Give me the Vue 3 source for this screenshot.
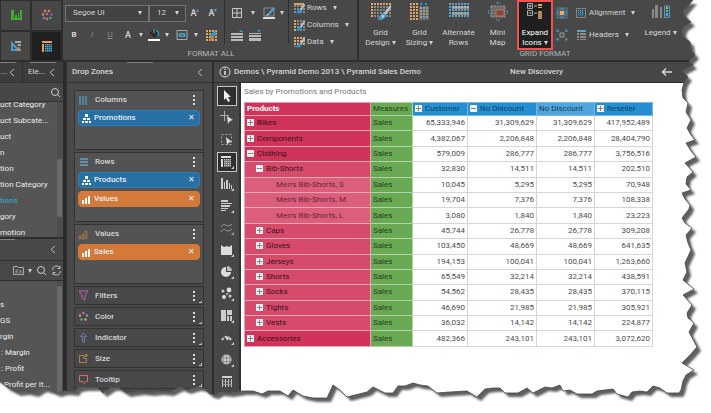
<script setup>
import { ref } from 'vue'

const font = ref('Segoe UI')
const size = ref('12')

const grid = (color, x0, y0, cols, rows, step = 3) => {
  let out = ''
  for (let r = 0; r < rows; r++)
    for (let c = 0; c < cols; c++)
      out += `<rect x="${x0 + c * step}" y="${y0 + r * step}" width="${step - 1}" height="${step - 1}" fill="${color}"/>`
  return out
}
const brush = '<path d="M17 1 10 10" stroke="#c4c4c4" stroke-width="2.4" stroke-linecap="round"/><path d="M10 8c-4 0-4 5-7 6 4 2 9 0 9-4z" fill="#4aa3cc"/><path d="M8 10l2 1-2 2z" fill="#fff"/>'
const smallBrush = '<path d="m11 3-4 6" stroke="#c4c4c4" stroke-width="2" stroke-linecap="round"/><path d="M7 7c-3 0-2 4-4 4 3 1 6 0 5-3z" fill="#1c9bd6"/>'
const gray = '#8a8a8a'
const tan = '#e0a862'

const icons = {
  chart: '<path d="M1 1h3v10H1zM5 6h2v5H5zM8 4h1v7H8zM10 1h2v10h-2zM1 9h11v2H1z" fill="#3fae2a"/>',
  dots: '<g><circle cx="4" cy="2" r="1.4" fill="#d9705f"/><circle cx="8" cy="2" r="1.4" fill="#d96f5f"/><circle cx="2" cy="5.500" r="1.300" fill="#cf8344"/><circle cx="6" cy="5" r="1.200" fill="#8f7fc0"/><circle cx="10.500" cy="5.500" r="1.300" fill="#8f5fae"/><circle cx="3" cy="9" r="1.300" fill="#5b89c7"/><circle cx="6" cy="10" r="1.400" fill="#e06c3c"/><circle cx="9.500" cy="9" r="1.300" fill="#4b9bb5"/></g>',
  design: '<path d="M1 1v10h10z" fill="#4f9cc5"/><path d="M3 6v3h3z" fill="#454545"/><path d="M5 1h6v2H5zM7 4h4v2H8z" fill="#a8a8a8"/><path d="m9 6 2 5H7z" fill="#cf9158"/>',
  grid: '<path d="M1 1h10v2H1zM1 4h2v8H1z" fill="#e0a05b"/><path d="M4 4h7v8H4z" fill="#2f5f7c"/>' + grid('#5fa9d0', 4, 4, 4, 4, 2),
  borders: '<path d="M1.500 1.500h9v9h-9zM6 1.500v9M1.500 6h9" fill="none" stroke="#c8c8c8"/>',
  paint: '<path d="M1 1h10v8H1z" fill="none" stroke="#8d8d8d"/><path d="m11 1-5 6" stroke="#4aa3cc" stroke-width="2"/><path d="M5 6 3 9l3-1z" fill="#ccc"/><path d="M0 10h12v2H0z" fill="#ddd"/>',
  fill: '<path d="m2 4 4-3 4 4-4 3z" fill="#303030" stroke="#222"/><path d="M6 0v4" stroke="#999"/><path d="M8 2c3 0 3 3 2 5" fill="none" stroke="#2b90bd" stroke-width="1.500"/><path d="M0 10h12v2H0z" fill="#fff"/>',
  merge: '<path d="M1 1.500h10v9H1z" fill="none" stroke="#a8a8a8"/><path d="M3 4h6v4H3zM1 5.500h2v1H1zM9 5.500h2v1H9z" fill="#4a9dc8"/><path d="M4 6h4" stroke="#2c5d78"/>',
  clear: grid(tan, 1, 1, 4, 4) + '<path d="m11 3-5 5" stroke="#2f9bd2" stroke-width="3"/><path d="m7 7-3 3 2 2 3-3z" fill="#e06a4e"/>',
  lineUp: '<path d="M0 4h12v2H0zM0 7h12v2H0zM0 10h12v2H0z" fill="#b9b9b9"/><path d="m8 3 2-2 2 2z" fill="#35a0d4"/>',
  lineDown: '<path d="M0 4h12v1H0zM0 6h12v2H0zM0 9h12v3H0z" fill="#b9b9b9"/><path d="m8 1 2 2 2-2z" fill="#35a0d4"/>',
  rows: grid(gray, 1, 3, 4, 3) + '<path d="M1 1h10v2H1z" fill="#d9a05e"/>' + smallBrush,
  columns: grid(gray, 1, 1, 4, 4) + grid(tan, 1, 1, 1, 4) + smallBrush,
  data: grid(tan, 1, 1, 4, 3) + '<path d="M1 10h4v1H1z" fill="#888"/>' + smallBrush,
  gridDesign: grid(gray, 0, 1, 7, 5) + grid(tan, 0, 1, 7, 1) + grid(tan, 0, 1, 1, 5) + '<g transform="translate(3 3)">' + brush + '</g>',
  gridSizing: '<path d="M9 4h10v14H9z" fill="#6a6a6a"/>' + grid('#9a9a9a', 10, 5, 3, 4) + grid(tan, 0, 1, 3, 6) + '<path d="M10 1h2v2h-2zM15 1h2v2h-2z" fill="#26a0dc"/>',
  altRows: grid('#5ba3cb', 0, 1, 7, 5) + '<path d="M3 4h17v3H3zM3 10h17v3H3z" fill="#8d8d8d"/>' + grid('#b5b5b5', 3, 4, 6, 1) + grid('#a5a5a5', 3, 10, 6, 1),
  miniMap: '<path d="M3 4h14v11H3z" fill="#6c6c6c" stroke="#999" stroke-dasharray="2 1"/><path d="M8 8h8v6H8z" fill="#7b4a43" stroke="#d86a55"/><path d="m8 2 2-2 2 2M8 17l2 2 2-2M1 8l-1 2 1 2M19 8l1 2-1 2" fill="none" stroke="#4795bb"/>',
  expand: '<path d="M2.500 1.500h5v5h-5zM2.500 8.500h5v5h-5z" fill="none" stroke="#aaa"/><path d="M3.500 4h3M5 2.500v3M3.500 11h3M9 4h3M9 11h3" fill="none" stroke="#bbb"/><path d="M13 2h4v2h-4zM13 5h4v1h-4z" fill="#eba45b"/><path d="M13 9h4v8h-4z" fill="#b98a50"/>',
  fit: '<path d="M1 1h10v10H1zM1 4h10M1 8h10M4 1v10M8 1v10" fill="none" stroke="#50819b"/><path d="M4 4h4v4H4z" fill="#f0aa58"/><path d="M6 1v2M6 9v2M1 6h2M9 6h2" stroke="#58b3e0"/>',
  spread: '<path d="M4 4h4v4H4z" fill="#555" stroke="#999"/><path d="M1 3V1h2M9 1h2v2M11 9v2H9M3 11H1V9M1 1l2 2M11 1 9 3M1 11l2-2M11 11 9 9" fill="none" stroke="#4a9ac4"/>',
  align: '<path d="M1.500 1.500h9v9h-9z" fill="none" stroke="#858585"/><path d="M3 3h6v6H3z" fill="#2f5c75"/>' + grid('#55a7d4', 3, 3, 3, 3, 2),
  headers: '<path d="M2 1h9v2H2z" fill="#55a7d4"/><path d="M2 4h2v2H2zM5 4h6v2H5zM2 7h2v2H2zM5 7h6v2H5zM2 10h2v1H2zM5 10h6v1H5z" fill="#8b8b8b"/>',
  legend: '<path d="M1 7h2v9H1zM4 3h3v13H4zM9 5h2v11H9z" fill="#898989"/><path d="M13.500 4h5v11.500h-5z" fill="#3a5666" stroke="#549ac0"/><path d="M15 5h2v2h-2z" fill="#e6a057"/><path d="M15 8h2v2h-2z" fill="#77b544"/><path d="M15 11h2v3h-2z" fill="#50a8d8"/>',
  zColumns: '<path d="M2 1v9M5 1v9M8 1v9" stroke="#5698bd" stroke-width="1.400"/>',
  zRows: '<path d="M2 2h8M2 5h8M2 8h8" stroke="#69a2bf" stroke-width="1.400"/>',
  zValues: '<path d="M1 7h2v3H1zM4 5h2v5H4zM7 2h2v8H7z" fill="#7a5c3e" stroke="#a5825a" stroke-width="0.600"/>',
  zFilters: '<path d="M1 1h9L7 5v5L4 8V5z" fill="none" stroke="#b066ad"/>',
  zColor: '<circle cx="5.500" cy="2" r="1.300" fill="#c966b8"/><circle cx="2" cy="4.500" r="1.300" fill="#e88254"/><circle cx="9" cy="4.500" r="1.300" fill="#6b93e0"/><circle cx="3.500" cy="8.500" r="1.300" fill="#43b0a4"/><circle cx="7.500" cy="8.500" r="1.300" fill="#dda23f"/>',
  zIndicator: '<path d="m5.500 1 3 3.500h-2V10h-2V4.500h-2z" fill="none" stroke="#7678bd"/>',
  zSize: '<path d="M5.500 2.500h-4v7h7v-4h-3zM7 1.500h2v2H7z" fill="none" stroke="#ad824e"/>',
  zTooltip: '<path d="M1.500 1.500h8v6h-2l-1.500 2-1.500-2h-3z" fill="none" stroke="#cf6f6b"/>',
  tree: '<path d="M4 1h3v3H4zM2 5h3v2H2zM6 5h3v2H6zM1 8h2v2H1zM4 8h3v2H4zM8 8h2v2H8z" fill="#fff"/>',
  bars: '<path d="M1 6h2v4H1zM4 4h2v6H4zM7 2h2v8H7z" fill="#fff"/>',
  cursor: '<path d="M4 1v10l2-2 2 4 2-1-2-4h3z" fill="#eee"/>',
  cross: '<path d="M4.500 0v10M0 4.500h9" stroke="#aaa"/><path d="m7 5 6 4-3 1-2 3z" fill="#ddd"/>',
  region: '<path d="M1.500 1.500h10v10h-10z" fill="none" stroke="#aaa" stroke-dasharray="2 2"/><path d="m6 4 6 5-3 .5L7 12z" fill="#ddd"/>',
  table: '<path d="M1 1h10v2H1zM1 4h2v8H1z" fill="#ddd"/><path d="M4 4h7v8H4z" fill="#777"/>' + grid('#c8c8c8', 4, 4, 4, 4, 2) + '<path d="M14 11v3h-3z" fill="#ccc"/>',
  column: '<path d="M1 1h2v11H1zM4 5h1v7H4zM6 3h2v9H6zM9 6h1v6H9zM11 8h1v4h-1z" fill="#ccc"/><path d="M14 11v3h-3z" fill="#ccc"/>',
  bar: '<path d="M1 1h7v2H1zM1 4h11v1H1zM1 6h9v2H1zM1 9h7v1H1zM1 11h5v1H1z" fill="#ccc"/><path d="M14 11v3h-3z" fill="#ccc"/>',
  line: '<path d="M1 6c4-7 5 3 11-3M1 11c4-7 5 3 11-3" fill="none" stroke="#999"/><path d="M14 11v3h-3z" fill="#aaa"/>',
  area: '<path d="M1 2l3 2 3-1 2 1 3-2v10H1z" fill="#ddd"/><path d="M14 11v3h-3z" fill="#ccc"/>',
  pie: '<path d="M6 2a5 5 0 1 0 5 5H6z" fill="#ddd"/><path d="M7 1a5 5 0 0 1 5 5H7z" fill="#bbb"/><path d="M14 11v3h-3z" fill="#ccc"/>',
  bubble: '<circle cx="3" cy="4" r="1.500" fill="#ccc"/><circle cx="9" cy="3" r="2.400" fill="#ddd"/><circle cx="7" cy="7" r="1" fill="#ccc"/><circle cx="4" cy="10" r="2" fill="#ddd"/><circle cx="10" cy="9" r="1.500" fill="#ccc"/><path d="M14 11v3h-3z" fill="#ccc"/>',
  treemap: '<path d="M1 1h5v11H1zM7 1h5v5H7zM7 7h2v5H7zM10 7h2v5h-2z" fill="#ccc"/><path d="M14 11v3h-3z" fill="#ccc"/>',
  gauge: '<path d="M2 9a5 5 0 0 1 9 0" fill="none" stroke="#ccc" stroke-width="2"/><path d="m4 5 4 5" stroke="#474747" stroke-width="3"/><path d="m5 5 3 4" stroke="#ddd" stroke-width="1.500"/><path d="M14 11v3h-3z" fill="#ccc"/>',
  globe: '<circle cx="6.500" cy="6.500" r="5" fill="#ccc"/><path d="M1 5h11M1 8.500h11M6.500 1v11M4 2q-2 4 0 9M9 2q2 4 0 9" fill="none" stroke="#777" stroke-width="0.700"/><path d="M14 11v3h-3z" fill="#ccc"/>',
  matrix: '<path d="M2 1h10v2H2zM2 4h1v8H2zM5 4h1v8H5zM8 4h1v8H8zM11 4h1v8h-1z" fill="#ccc"/><path d="M2 6.500h10M2 9.500h10" stroke="#999"/>',
  search: '<circle cx="5" cy="5" r="3.500" fill="none" stroke="#ccc"/><path d="m7.500 7.500 2.500 2.500" stroke="#ccc"/>',
  folder: '<path d="M.5 1.500h4l1 1h5v7H.5z" fill="none" stroke="#aaa"/><path d="M3 8.500V5h2M3 7h2M6 5l3 3.500M9 5 6 8.500" fill="none" stroke="#aaa" stroke-width="0.800"/>',
  refresh: '<path d="M1.500 5a4 4 0 0 1 7.500-2M9.500 6A4 4 0 0 1 2 8M9 1v2.500H6.500M2 10V7.500h2.500" fill="none" stroke="#bbb"/>',
  back: '<path d="M5 2 1.500 5.500 5 9M1.500 5.500H11" fill="none" stroke="#ddd" stroke-width="1.300"/>',
  info: '<circle cx="6" cy="6" r="5" fill="none" stroke="#ddd"/><path d="M6 5v4M6 2.500v1.300" stroke="#eee" stroke-width="1.400"/>',
  chevron: '<path d="M7 2 3 5.500 7 9" fill="none" stroke="#bbb"/>',
  '+': '<path d="M0 0h7v7H0z" fill="#f4f0f1"/><path d="M3 1h1v5H3zM1 3h5v1H1z" fill="#858585"/>',
  '-': '<path d="M0 0h7v7H0z" fill="#f4f0f1"/><path d="M1 3h5v1H1z" fill="#858585"/>',
}

const views = [
  { icon: 'chart', label: 'Chart' }, { icon: 'dots', label: 'Explore' },
  { icon: 'design', label: 'Design' }, { icon: 'grid', label: 'Grid', active: true },
]
const parts = [{ icon: 'rows', label: 'Rows' }, { icon: 'columns', label: 'Columns' }, { icon: 'data', label: 'Data' }]
const big = [
  { icon: 'gridDesign', a: 'Grid', b: 'Design', menu: true },
  { icon: 'gridSizing', a: 'Grid', b: 'Sizing', menu: true },
  { icon: 'altRows', a: 'Alternate', b: 'Rows' },
  { icon: 'miniMap', a: 'Mini', b: 'Map' },
  { icon: 'expand', a: 'Expand', b: 'Icons', menu: true, active: true },
]
const elements = ['uct Category', 'uct Subcate...', 'uct', 'n', 'tion', 'tion Category', 'tions', 'gory', 'motion']
const measures = ['s', 'GS', 'rgin', ': Margin', ': Profit', 'Profit per It...']
const zones = [
  { name: 'Columns', icon: 'zColumns', cls: 'one', chips: [{ t: 'Promotions', c: 'blue', i: 'tree' }] },
  { name: 'Rows', icon: 'zRows', cls: 'two', chips: [{ t: 'Products', c: 'blue', i: 'tree' }, { t: 'Values', c: 'orange', i: 'bars' }] },
  { name: 'Values', icon: 'zValues', cls: 'one', chips: [{ t: 'Sales', c: 'orange', i: 'bars' }] },
  ...['Filters', 'Color', 'Indicator', 'Size', 'Tooltip'].map(n => ({ name: n, icon: 'z' + n, cls: 'closed', chips: [] })),
]
const tools = ['cursor', 'cross', 'region', 'table', 'column', 'bar', 'line', 'area', 'pie', 'bubble', 'treemap', 'gauge', 'globe', 'matrix']
const rows = [
  ['Bikes', 0, '+', '65,333,946', '31,309,629', '417,952,489'],
  ['Components', 0, '+', '4,382,067', '2,206,848', '28,404,790'],
  ['Clothing', 0, '-', '579,009', '286,777', '3,756,516'],
  ['Bib-Shorts', 1, '-', '32,830', '14,511', '202,510'],
  ["Men's Bib-Shorts, S", 2, '', '10,045', '5,295', '70,948'],
  ["Men's Bib-Shorts, M", 2, '', '19,704', '7,376', '108,338'],
  ["Men's Bib-Shorts, L", 2, '', '3,080', '1,840', '23,223'],
  ['Caps', 1, '+', '45,744', '26,778', '309,208'],
  ['Gloves', 1, '+', '103,450', '48,669', '641,635'],
  ['Jerseys', 1, '+', '194,153', '100,041', '1,263,660'],
  ['Shorts', 1, '+', '65,549', '32,214', '438,591'],
  ['Socks', 1, '+', '54,562', '28,435', '370,115'],
  ['Tights', 1, '+', '46,690', '21,985', '305,921'],
  ['Vests', 1, '+', '36,032', '14,142', '224,877'],
  ['Accessories', 0, '+', '482,366', '243,101', '3,072,620'],
]

const edge = 'L693 0 688 6 683 12 685 17 691 22 684 27 682 32 685 38 690 42 691 50 695 55 689 61 693 65 682 71 688 77 684 82 682 90 683 98 688 103 686 112 691 120 687 128 691 135 695 140 686 143 691 151 696 157 685 163 693 172 687 177 686 184 691 190 682 193 685 199 690 205 689 209 682 218 685 223 692 228 686 235 688 243 691 250 685 263 687 272 683 280 694 289 683 295 692 305 687 313 688 318 694 323 689 332 697 347 690 355 682 363 694 370 686 375 683 381 681 390 679 393 667 393 660 388 653 386 647 392 640 391 632 392 628 397 617 394 613 389 605 390 597 391 592 394 577 394 570 390 563 391 560 385 552 388 545 387 533 393 527 388 518 393 505 393 500 388 493 388 485 389 477 397 467 391 450 392 437 393 428 386 420 385 413 383 405 386 398 386 393 393 385 393 373 387 367 392 347 397 340 390 333 385 327 398 313 398 303 396 293 390 288 396 280 391 268 391 262 394 253 391 243 391 230 393 220 392 215 395 210 394 203 388 197 387 187 390 180 387 170 392 160 391 150 392 141 391 133 392 127 393 117 387 112 387 103 393 97 387 85 387 78 388 75 392 65 391 57 393 50 390 43 388 35 393 26 391 17 392 7 387 0 381'
</script>

<template>
  <div class="app">
    <header class="ribbon">
      <nav class="views">
        <button v-for="v in views" :key="v.icon" :class="{ active: v.active }" :aria-label="v.label">
          <svg class="i12" viewBox="0 0 12 12" v-html="icons[v.icon]" />
        </button>
      </nav>
      <section class="group format">
        <div class="tools-row">
          <div class="stack text-tools">
            <div class="line">
              <label class="pick wide"><select v-model="font" aria-label="Font"><option>Segoe UI</option></select><i class="caret" /></label>
              <label class="pick"><select v-model="size" aria-label="Font size"><option>12</option></select><i class="caret" /></label>
              <button class="w18 letter" aria-label="Grow font">A<sup>▴</sup></button>
              <button class="w18 letter" aria-label="Shrink font">A<sup>▾</sup></button>
            </div>
            <div class="line">
              <button class="w18 bold">B</button>
              <button class="w18 italic">I</button>
              <button class="w18 under">U</button>
              <button class="w18 letter">A</button>
              <button class="w8" aria-label="Text colour"><i class="caret" /></button>
              <button class="w18" aria-label="Fill"><svg class="i12" viewBox="0 0 12 12" v-html="icons.fill" /></button>
              <button class="w8" aria-label="Fill colour"><i class="caret" /></button>
              <button class="w22" aria-label="Merge"><svg class="i12" viewBox="0 0 12 12" v-html="icons.merge" /></button>
              <button class="w8" aria-label="Merge options"><i class="caret" /></button>
              <button class="w22" aria-label="Clear format"><svg class="i12" viewBox="0 0 12 12" v-html="icons.clear" /></button>
            </div>
          </div>
          <div class="stack border-tools">
            <div class="line">
              <button class="w18" aria-label="Borders"><svg class="i12" viewBox="0 0 12 12" v-html="icons.borders" /></button>
              <button class="w12" aria-label="Border options"><i class="caret" /></button>
              <button class="w18" aria-label="Border paint"><svg class="i12" viewBox="0 0 12 12" v-html="icons.paint" /></button>
              <button class="w8" aria-label="Border colour"><i class="caret" /></button>
            </div>
            <div class="line">
              <button class="w18" aria-label="Raise"><svg class="i12" viewBox="0 0 12 12" v-html="icons.lineUp" /></button>
              <button class="w18" aria-label="Lower"><svg class="i12" viewBox="0 0 12 12" v-html="icons.lineDown" /></button>
            </div>
          </div>
          <div class="parts">
            <button v-for="p in parts" :key="p.label">
              <svg class="i12" viewBox="0 0 12 12" v-html="icons[p.icon]" />{{ p.label }}<i class="caret" />
            </button>
          </div>
        </div>
        <h2>FORMAT ALL</h2>
      </section>
      <section class="group gridformat">
        <div class="tools-row">
          <button v-for="b in big" :key="b.icon" class="big" :class="{ active: b.active }">
            <svg class="i20" viewBox="0 0 20 20" v-html="icons[b.icon]" />
            <span>{{ b.a }}</span><span>{{ b.b }}<i v-if="b.menu" class="caret" /></span>
          </button>
          <div class="stack extra">
            <div class="line">
              <button class="w18" aria-label="Fit"><svg class="i12" viewBox="0 0 12 12" v-html="icons.fit" /></button>
              <button class="named"><svg class="i12" viewBox="0 0 12 12" v-html="icons.align" />Alignment<i class="caret" /></button>
            </div>
            <div class="line">
              <button class="w18" aria-label="Spread"><svg class="i12" viewBox="0 0 12 12" v-html="icons.spread" /></button>
              <button class="named"><svg class="i12" viewBox="0 0 12 12" v-html="icons.headers" />Headers<i class="caret" /></button>
            </div>
          </div>
          <button class="big"><svg class="i20" viewBox="0 0 20 20" v-html="icons.legend" /><span>Legend<i class="caret" /></span></button>
        </div>
        <h2>GRID FORMAT</h2>
      </section>
    </header>

    <div class="body">
      <aside class="left">
        <div class="tabs">
          <button class="tab first">...<svg class="i11" viewBox="0 0 11 11" v-html="icons.chevron" /></button>
          <button class="tab">Ele...<svg class="i11" viewBox="0 0 11 11" v-html="icons.chevron" /></button>
        </div>
        <div class="search"><button aria-label="Search"><svg class="i11" viewBox="0 0 11 11" v-html="icons.search" /></button></div>
        <div class="list top">
          <ul><li v-for="e in elements" :key="e" :class="{ on: e === 'tions' }">{{ e }}</li></ul>
          <div class="track"><i class="thumb" /></div>
        </div>
        <div class="sub"><button aria-label="Collapse"><svg class="i11" viewBox="0 0 11 11" v-html="icons.chevron" /></button></div>
        <div class="sub bar">
          <button aria-label="Formula"><svg class="i11" viewBox="0 0 11 11" v-html="icons.folder" /></button><i class="caret" />
          <button aria-label="Search measures"><svg class="i11" viewBox="0 0 11 11" v-html="icons.search" /></button>
          <button aria-label="Refresh"><svg class="i11" viewBox="0 0 11 11" v-html="icons.refresh" /></button>
        </div>
        <div class="list low">
          <ul><li v-for="(m, i) in measures" :key="m" :class="{ deep: i > 2 }">{{ m }}</li></ul>
          <div class="track"><i class="thumb full" /></div>
        </div>
      </aside>

      <aside class="zones">
        <div class="bar-head"><span>Drop Zones</span><button aria-label="Collapse zones"><svg class="i11" viewBox="0 0 11 11" v-html="icons.chevron" /></button></div>
        <div class="cards">
          <section v-for="z in zones" :key="z.name" class="zone" :class="z.cls">
            <div class="zhead">
              <svg class="i11" viewBox="0 0 11 11" v-html="icons[z.icon]" />
              <span>{{ z.name }}</span>
              <button class="more" :aria-label="z.name + ' options'"><i /><i /><i /></button>
            </div>
            <div v-for="c in z.chips" :key="c.t" class="chip" :class="c.c">
              <svg class="i11" viewBox="0 0 11 11" v-html="icons[c.i]" /><span>{{ c.t }}</span><button :aria-label="'Remove ' + c.t">✕</button>
            </div>
          </section>
        </div>
      </aside>

      <main class="main">
        <div class="titlebar">
          <svg class="i12" viewBox="0 0 12 12" v-html="icons.info" />
          <span class="path">Demos \ Pyramid Demo 2013 \ Pyramid Sales Demo</span>
          <span class="name">New Discovery</span>
          <button aria-label="Back"><svg class="i12" viewBox="0 0 12 11" v-html="icons.back" /></button>
        </div>
        <div class="work">
          <nav class="palette">
            <button v-for="t in tools" :key="t" :class="{ active: t === 'cursor' || t === 'table' }" :aria-label="t">
              <svg class="i14" viewBox="0 0 14 14" v-html="icons[t]" />
            </button>
          </nav>
          <div class="sheet">
            <h1>Sales by Promotions and Products</h1>
            <table>
              <colgroup><col class="c1"><col class="c2"><col class="c3"><col class="c4"><col class="c5"><col class="c6"></colgroup>
              <thead>
                <tr>
                  <th class="prod">Products</th><th class="meas">Measures</th>
                  <th><button class="box" aria-label="Expand Customer"><svg class="i7" viewBox="0 0 7 7" v-html="icons['+']" /></button>Customer</th>
                  <th><button class="box" aria-label="Collapse No Discount"><svg class="i7" viewBox="0 0 7 7" v-html="icons['-']" /></button>No Discount</th>
                  <th class="light">No Discount</th>
                  <th><button class="box" aria-label="Expand Reseller"><svg class="i7" viewBox="0 0 7 7" v-html="icons['+']" /></button>Reseller</th>
                </tr>
              </thead>
              <tbody>
                <tr v-for="r in rows" :key="r[0]">
                  <td class="item" :class="'l' + r[1]"><button v-if="r[2]" class="box" :aria-label="'Toggle ' + r[0]"><svg class="i7" viewBox="0 0 7 7" v-html="icons[r[2]]" /></button>{{ r[0] }}</td>
                  <td class="meas">Sales</td>
                  <td>{{ r[3] }}</td><td>{{ r[4] }}</td><td>{{ r[4] }}</td><td>{{ r[5] }}</td>
                </tr>
              </tbody>
            </table>
          </div>
        </div>
      </main>
    </div>

    <svg class="torn" viewBox="0 0 711 413" preserveAspectRatio="none">
      <defs>
        <clipPath id="outside"><path clip-rule="evenodd" :d="'M0 0H711V413H0ZM0 0' + edge + 'Z'" /></clipPath>
        <filter id="soft"><feGaussianBlur stdDeviation="1" /></filter>
      </defs>
      <g clip-path="url(#outside)">
        <path d="M0 0H711V413H0Z" fill="#fff" />
        <path :d="'M-9 -9L0 0' + edge + 'L-9 376Z'" transform="translate(4 4)" fill="#5e5e5e" filter="url(#soft)" />
      </g>
      <path :d="'M' + edge.slice(1)" fill="none" stroke="#444" stroke-width="0.800" />
    </svg>
  </div>
</template>

<style>
body { margin: 0; background: #fff; }
</style>

<style scoped>
* { box-sizing: border-box; }
.app { position: relative; height: 100vh; overflow: hidden; display: flex; flex-direction: column; background: #2e2e2e; color: #d6d6d6; font: 8px/12px Roboto, "Open Sans", sans-serif; }
button { appearance: none; border: 0; padding: 0; margin: 0; background: none; color: inherit; font: inherit; display: flex; align-items: center; justify-content: center; }
svg { display: block; flex: none; }
h1, h2, ul { margin: 0; padding: 0; font-weight: 400; list-style: none; }
.i7 { width: 7px; height: 7px; }
.i11 { width: 11px; height: 11px; }
.i12 { width: 12px; height: 12px; }
.i14 { width: 14px; height: 14px; }
.i20 { width: 20px; height: 20px; }
.caret { display: inline-block; flex: none; width: 0; height: 0; border: 2px solid transparent; border-top: 4px solid #d0d0d0; border-bottom: 0; }
.w8 { width: 8px; }
.w12 { width: 14px; }
.w18 { width: 18px; }
.w22 { width: 21px; }

.ribbon { display: flex; gap: 2px; height: 60px; flex: none; }
.views { display: grid; grid-template-columns: 29px 29px; gap: 2px; padding: 1px 0 0 1px; width: 61px; }
.views button { background: #474747; }
.views .active { background: #202020; }
.group { background: #484848; display: flex; flex-direction: column; }
.format { width: 294px; padding-left: 2px; }
.gridformat { flex: 1; }
.tools-row { display: flex; height: 48px; }
h2 { font-size: 8px; line-height: 12px; text-align: center; color: #b4b4b4; }
.gridformat h2 { padding-left: 22px; width: 350px; }
.stack { display: flex; flex-direction: column; gap: 4px; padding-top: 4px; }
.line { display: flex; height: 18px; align-items: center; }
.text-tools { width: 160px; height: 44px; border-right: 1px solid #303030; }
.border-tools { width: 64px; height: 44px; padding-left: 3px; border-right: 1px solid #303030; }
.pick { display: flex; align-items: center; width: 37px; height: 17px; border: 1px solid #747474; background: #424242; padding-right: 6px; }
.pick.wide { width: 84px; }
.pick select { appearance: none; flex: 1; width: 20px; border: 0; padding: 0 0 0 7px; background: none; color: #d6d6d6; font: inherit; outline: 0; }
.letter { font-size: 9px; font-weight: 500; }
.letter sup { font-size: 6px; line-height: 6px; color: #4aa3cc; align-self: flex-start; }
.bold { font-weight: 700; }
.italic { font-style: italic; color: #8c8c8c; }
.under { text-decoration: underline; color: #8c8c8c; }
.parts { display: flex; flex-direction: column; align-items: flex-start; gap: 5px; padding: 2px 0 0 4px; }
.parts button { height: 12px; gap: 2px; }
.parts .caret { margin-left: 4px; }
.big { width: 39px; flex-direction: column; justify-content: flex-start; padding-top: 2px; line-height: 10px; height: 50px; }
.big svg { margin-bottom: 6px; }
.big .caret { margin-left: 2px; }
.big.active { width: 36px; background: #1f1f1f; color: #fff; border: 2px solid #ef5350; padding-top: 0; }
.extra { width: 88px; }
.named { gap: 2px; margin-left: 4px; }
.named .caret { margin-left: 4px; }
.gridformat .big:first-child { margin-left: 2px; }

.body { display: flex; flex: 1; min-height: 0; gap: 2px; padding-top: 2px; }
.left { width: 65px; flex: none; display: flex; flex-direction: column; border-right: 2px solid #2b2b2b; }
.tabs { display: flex; gap: 1px; height: 20px; }
.tab { justify-content: space-between; flex: 1; padding: 0 5px; background: linear-gradient(#808080, #808080) center top / 26px 1px no-repeat #3d3d3d; }
.tab.first { flex: none; width: 22px; padding: 0 4px 0 1px; background-size: 16px 1px; background-position: left top; }
.search { display: flex; justify-content: flex-end; height: 20px; padding-right: 2px; background: #474747; border-top: 1px solid #333; border-bottom: 1px solid #333; }
.search button { width: 11px; }
.list { display: flex; justify-content: space-between; background: #555; overflow: hidden; color: #ececec; }
.list ul { white-space: nowrap; }
.list li { height: 16px; line-height: 16px; }
.list .on { color: #28b6d4; }
.list .deep { padding-left: 1px; }
.list .deep:last-child { padding-left: 4px; }
.top { height: 135px; align-items: flex-start; }
.top ul { margin-top: -5px; }
.track { width: 6px; flex: none; align-self: stretch; background: #4d4d4d; padding-top: 57px; }
.thumb { display: block; width: 5px; height: 58px; border-radius: 2px; background: #6a6a6a; }
.sub { display: flex; align-items: center; justify-content: flex-end; height: 21px; padding-right: 4px; margin-top: 2px; background: linear-gradient(#808080, #808080) left top / 15px 1px no-repeat #484848; }
.sub.bar { margin-top: 1px; height: 19px; gap: 4px; padding-right: 1px; background: #484848; }
.low { flex: 1; margin-top: 1px; }
.low ul { padding-top: 16px; }
.low .track { padding-top: 5px; }
.thumb.full { height: 130px; }

.zones { width: 145px; flex: none; display: flex; flex-direction: column; background: #494949; }
.bar-head { display: flex; align-items: center; justify-content: space-between; height: 21px; padding: 0 6px 0 5px; border-bottom: 1px solid #333; background: linear-gradient(#808080, #808080) center top / 26px 1px no-repeat; }
.bar-head, .titlebar, .zhead, .chip { font-weight: 500; }
.cards { display: flex; flex-direction: column; gap: 2px; padding: 7px 8px 0 7px; }
.zone { border: 1px solid #333; background: #535353; padding: 0 3px; }
.zone.one { height: 60px; }
.zone.two { height: 70px; }
.zone.closed { height: 19px; background: linear-gradient(135deg, transparent 50%, #bbb 50%) right 1px bottom 1px / 3px 3px no-repeat #484848; }
.zhead { display: flex; align-items: center; gap: 6px; height: 18px; margin-bottom: 1px; }
.closed .zhead { height: 17px; }
.zhead span, .chip span { flex: 1; }
.more { flex-direction: column; gap: 2px; width: 12px; }
.more i { width: 2px; height: 2px; background: #ddd; }
.chip { display: flex; align-items: center; height: 16px; margin-bottom: 3px; padding: 0 4px 0 2px; gap: 2px; border-radius: 4px; color: #e8edf2; }
.chip.blue { background: #286fa3; border: 1px solid #2f7fb9; }
.chip.orange { background: #d37a3b; border: 1px solid #dd7a30; }

.main { flex: 1; min-width: 0; display: flex; flex-direction: column; }
.titlebar { display: flex; align-items: center; height: 20px; gap: 3px; padding: 0 38px 0 5px; background: #474747; }
.path { flex: 1; }
.name { width: 148px; }
.work { flex: 1; display: flex; margin-top: 1px; }
.palette { width: 27px; flex: none; display: flex; flex-direction: column; align-items: center; gap: 2px; padding: 3px 0 0; background: #474747; border-right: 2px solid #333; }
.palette button { width: 20px; height: 20px; flex: none; }
.palette .active { border: 1px solid #c4c4c4; background: #303030; }
.sheet { flex: 1; min-width: 0; background: #fff; padding: 2px 0 0 3px; }
h1 { height: 17px; line-height: 13px; font-size: 8px; color: #777; }
table { border-collapse: collapse; table-layout: fixed; width: 408px; height: 245px; color: #4c4c4c; line-height: 12px; }
.c1 { width: 126px; }
.c2 { width: 42px; }
.c3 { width: 55px; }
.c4 { width: 69px; }
.c5 { width: 58px; }
.c6 { width: 58px; }
th, td { border: 1px solid #d6d6d6; padding: 0 2px; white-space: nowrap; text-align: right; }
th { background: #2490d3; border-color: #79b7de; color: #153d5c; font-weight: 400; text-align: left; }
th.light { background: #4fa6dd; }
th.prod { background: #d0345a; color: #fff; font-weight: 700; border-color: #e499ac; }
th.meas, td.meas { background: #6aa953; border-color: #b5d3aa; color: #24401c; text-align: left; }
.item { text-align: left; color: #3b101c; border-color: #e7a5b5; }
.l0 { background: #d0345a; }
.l1 { background: #d64a6c; padding-left: 11px; }
.l2 { background: #dc5e7b; padding-left: 31px; color: #64283a; }
.box { display: inline-flex; margin-right: 3px; vertical-align: -1px; }

.torn { position: absolute; inset: 0; width: 100%; height: 100%; pointer-events: none; }
</style>
